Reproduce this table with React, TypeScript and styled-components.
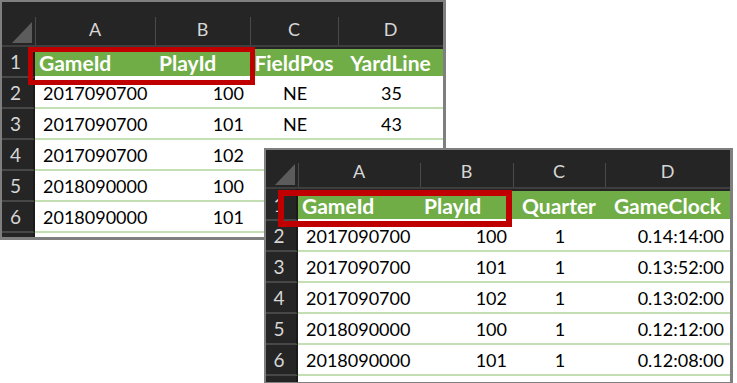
import React from "react";
import styled, { createGlobalStyle } from "styled-components";

type Align = "left" | "right" | "center";

interface SheetSpec {
  x: number;
  y: number;
  rowHeader: number;
  widths: number[];
  headHeight: number;
  titleHeight: number;
  rowHeight: number;
  height: number;
  titles: string[];
  titleAlign: Align[];
  dataAlign: Align[];
  rows: string[][];
  box: { left: number; top: number; width: number; height: number; line: number };
}

const GlobalStyle = createGlobalStyle`
  html, body {
    margin: 0;
    padding: 0;
    background: #ffffff;
  }
  body {
    font-family: Lato, "Open Sans", "Liberation Sans", sans-serif;
  }
`;

const Canvas = styled.div`
  position: relative;
  width: 737px;
  height: 383px;
  overflow: hidden;
  background: #ffffff;
`;

const Window = styled.div<{ $x: number; $y: number; $h: number }>`
  position: absolute;
  left: ${(p) => p.$x}px;
  top: ${(p) => p.$y}px;
  height: ${(p) => p.$h}px;
  border-style: solid;
  border-color: #7f7f7f;
  border-width: 2px 3px 3px 2px;
  background: #ffffff;
  overflow: hidden;
`;

const Grid = styled.div<{ $cols: string; $rows: string }>`
  display: grid;
  grid-template-columns: ${(p) => p.$cols};
  grid-template-rows: ${(p) => p.$rows};
`;

const Corner = styled.div`
  position: relative;
  background: #252525;
  border-bottom: 2px solid #3e3e3e;
  &::after {
    content: "";
    position: absolute;
    right: 3px;
    bottom: 2px;
    width: 20px;
    height: 21px;
    background: #5c5c5c;
    clip-path: polygon(100% 0, 100% 100%, 0 100%);
  }
`;

const ColHead = styled.div`
  position: relative;
  background: #252525;
  color: #d6d6d6;
  font-size: 18px;
  display: flex;
  align-items: flex-end;
  justify-content: center;
  padding-bottom: 5px;
  border-bottom: 2px solid #3e3e3e;
  box-sizing: border-box;
  &::before {
    content: "";
    position: absolute;
    left: 0;
    top: 34%;
    bottom: 0;
    width: 1px;
    background: #4a4a4a;
  }
`;

const RowHead = styled.div`
  background: #252525;
  color: #d6d6d6;
  font-size: 19px;
  display: flex;
  align-items: center;
  justify-content: center;
  padding-right: 4px;
  border-bottom: 2px solid #474747;
  border-right: 2px solid #1a1a1a;
  box-sizing: border-box;
`;

const TitleCell = styled.div<{ $align: Align }>`
  background: #70ad47;
  color: #ffffff;
  font-size: 21px;
  font-weight: 700;
  display: flex;
  align-items: center;
  justify-content: ${(p) =>
    p.$align === "left" ? "flex-start" : p.$align === "right" ? "flex-end" : "center"};
  padding: 0 4px;
  border-top: 2px solid #252525;
  border-bottom: 2px solid #ffffff;
  white-space: nowrap;
  box-sizing: border-box;
  overflow: hidden;
`;

const DataCell = styled.div<{ $align: Align }>`
  background: #ffffff;
  color: #000000;
  font-size: 18px;
  display: flex;
  align-items: center;
  justify-content: ${(p) =>
    p.$align === "left" ? "flex-start" : p.$align === "right" ? "flex-end" : "center"};
  padding: 0 6px 0 8px;
  border-bottom: 2px solid #c5dfb4;
  white-space: nowrap;
  box-sizing: border-box;
`;

const Highlight = styled.div<{ $line: number }>`
  position: absolute;
  box-sizing: border-box;
  border: ${(p) => p.$line}px solid #c00000;
  pointer-events: none;
`;

const letters = ["A", "B", "C", "D"];

function Sheet({ spec }: { spec: SheetSpec }) {
  const cols = `${spec.rowHeader}px ${spec.widths.map((w) => `${w}px`).join(" ")}`;
  const rows = `${spec.headHeight}px ${spec.titleHeight}px repeat(${spec.rows.length + 1}, ${spec.rowHeight}px)`;
  const width = spec.rowHeader + spec.widths.reduce((a, b) => a + b, 0);
  return (
    <Window $x={spec.x} $y={spec.y} $h={spec.height} style={{ width }}>
      <Grid $cols={cols} $rows={rows}>
        <Corner />
        {letters.map((l) => (
          <ColHead key={l}>{l}</ColHead>
        ))}
        <RowHead>1</RowHead>
        {spec.titles.map((t, i) => (
          <TitleCell key={t} $align={spec.titleAlign[i]}>
            {t}
          </TitleCell>
        ))}
        {spec.rows.map((r, ri) => (
          <React.Fragment key={ri}>
            <RowHead>{ri + 2}</RowHead>
            {r.map((v, ci) => (
              <DataCell key={ci} $align={spec.dataAlign[ci]}>
                {v}
              </DataCell>
            ))}
          </React.Fragment>
        ))}
        {/* the next row only peeks out under the last one */}
        <RowHead />
        {letters.map((l) => (
          <DataCell key={l} $align="left" />
        ))}
      </Grid>
      <Highlight
        $line={spec.box.line}
        style={{
          left: spec.box.left,
          top: spec.box.top,
          width: spec.box.width,
          height: spec.box.height,
        }}
      />
    </Window>
  );
}

const plays: SheetSpec = {
  x: 0,
  y: 0,
  rowHeader: 33,
  widths: [120, 95, 88, 105],
  headHeight: 45,
  titleHeight: 31,
  rowHeight: 31,
  height: 235,
  titles: ["GameId", "PlayId", "FieldPos", "YardLine"],
  titleAlign: ["left", "left", "center", "center"],
  dataAlign: ["left", "right", "center", "center"],
  rows: [
    ["2017090700", "100", "NE", "35"],
    ["2017090700", "101", "NE", "43"],
    ["2017090700", "102", "NE", "43"],
    ["2018090000", "100", "ATL", "25"],
    ["2018090000", "101", "ATL", "25"],
  ],
  box: { left: 26, top: 45, width: 227, height: 38, line: 5 },
};

const clock: SheetSpec = {
  x: 264,
  y: 148,
  rowHeader: 32,
  widths: [122, 93, 92, 125],
  headHeight: 39,
  titleHeight: 32,
  rowHeight: 31,
  height: 232,
  titles: ["GameId", "PlayId", "Quarter", "GameClock"],
  titleAlign: ["left", "left", "center", "center"],
  dataAlign: ["left", "right", "center", "right"],
  rows: [
    ["2017090700", "100", "1", "0.14:14:00"],
    ["2017090700", "101", "1", "0.13:52:00"],
    ["2017090700", "102", "1", "0.13:02:00"],
    ["2018090000", "100", "1", "0.12:12:00"],
    ["2018090000", "101", "1", "0.12:08:00"],
  ],
  box: { left: 12, top: 40, width: 234, height: 37, line: 6 },
};

export default function App() {
  return (
    <>
      <GlobalStyle />
      <Canvas>
        <Sheet spec={plays} />
        <Sheet spec={clock} />
      </Canvas>
    </>
  );
}
